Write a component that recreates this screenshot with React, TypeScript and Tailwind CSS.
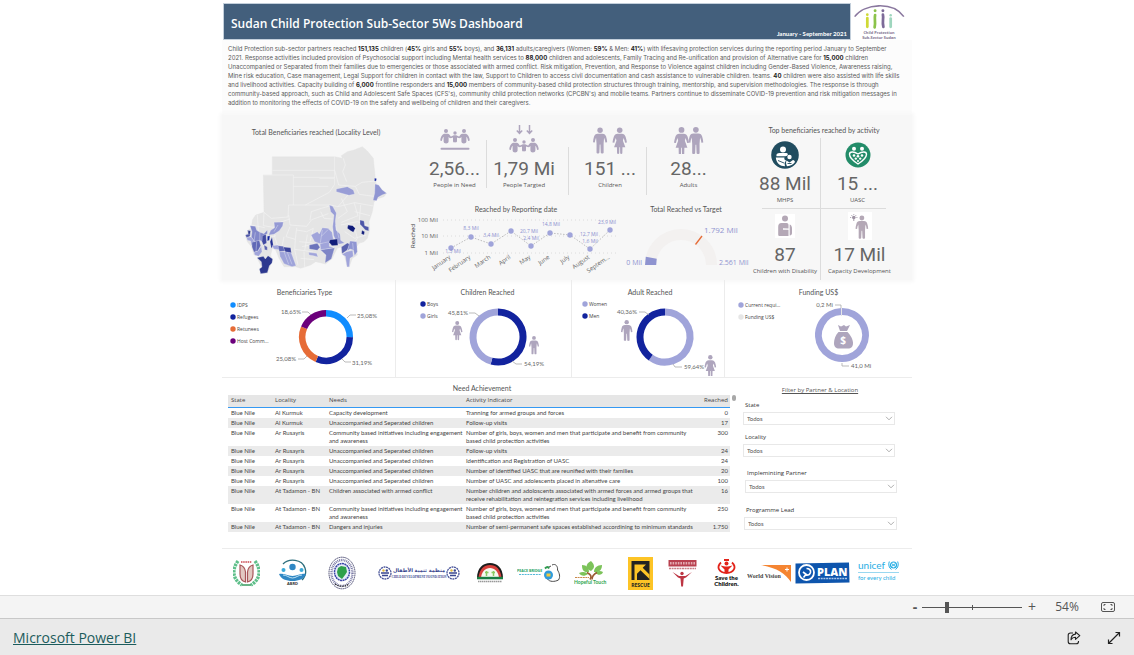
import React from "react";

type Slice = { label: string; value: number; color: string };

const INK = "#aea5bd";
const LILAC = "#a0a4da";
const NAVY = "#12239e";

/* ---------- pictograms ---------- */

type FigureProps = { x: number; y: number; s?: number; fill?: string };

function Man({ x, y, s = 1, fill = INK }: FigureProps) {
  return (
    <g transform={`translate(${x} ${y}) scale(${s})`} fill={fill}>
      <circle cx="6" cy="2.3" r="2.3" />
      <path d="M4 5.3h4c1.8 0 2.6 1 3.1 2.4.5 1.500.8 3.200.9 4.900l-1.500.2c-.2-1.600-.5-2.900-1.100-4.200L9 13.600v7.700c0 .9-2.300.9-2.400 0L6.300 14.500h-.6l-.3 6.800c-.1.9-2.400.9-2.400 0v-7.700l-.4-5C2 9.900 1.700 11.200 1.500 12.800L0 12.600c.1-1.700.4-3.400.9-4.900C1.400 6.300 2.200 5.300 4 5.300z" />
    </g>
  );
}

function Woman({ x, y, s = 1, fill = INK }: FigureProps) {
  return (
    <g transform={`translate(${x} ${y}) scale(${s})`} fill={fill}>
      <circle cx="6" cy="2.3" r="2.3" />
      <path d="M4.300 5.300h3.400c1.700 0 2.600 1 3.200 2.400.5 1.500.9 3.200 1.100 4.900l-1.500.2c-.3-1.600-.7-2.900-1.300-4.100l-.5 2.300 2 5.500H8.300l-.1 4.900c-.1.800-1.700.800-1.800 0l-.1-4.900h-.6l-.1 4.900c-.1.800-1.700.800-1.800 0l-.1-4.900H1.300l2-5.500-.5-2.300c-.6 1.200-1 2.500-1.300 4.100L0 12.600c.2-1.700.6-3.400 1.100-4.900.6-1.400 1.500-2.400 3.200-2.400z" />
    </g>
  );
}

function Family({ dy = 0 }: { dy?: number }) {
  return (
    <g transform={`translate(0 ${dy})`} fill={INK}>
      <circle cx="6" cy="2" r="2" />
      <circle cx="15" cy="4" r="1.700" />
      <circle cx="24" cy="2" r="2" />
      <path d="M4 4.800h4c1.500.5 2.500 2 3.200 3.600L10 9.200 8.600 8v4.500c0 2.500-5 2.500-5 0V7.800c-.9 1-1.400 2.500-1.700 4.200L.2 11.600C.5 8.600 1.800 5.500 4 4.800z" />
      <path d="M26 4.800h-4c-1.500.5-2.500 2-3.200 3.600l1.200.8L21.400 8v4.500c0 2.500 5 2.500 5 0V7.800c.9 1 1.400 2.500 1.700 4.200l1.700-.4c-.3-3-1.600-6.100-3.800-6.800z" />
      <path d="M13.800 6.200h2.400l3.800 1.800-.5 1.300-2.500-.7v3.600c0 1.600-4 1.600-4 0V8.600l-2.500.7L10 8z" />
    </g>
  );
}

function NeedIcon() {
  return (
    <svg viewBox="0 0 30 22" className="h-[22px] w-[30px]" aria-hidden="true">
      <Family />
      <path d="M1.500 19.800h27" stroke={INK} strokeWidth="2" strokeLinecap="round" />
    </svg>
  );
}

function TargetIcon() {
  return (
    <svg viewBox="0 0 30 30" className="h-[30px] w-[30px]" aria-hidden="true">
      <path d="M10.500 0v8M7.800 5.500l2.700 3 2.700-3M20.500 0v8M17.800 5.500l2.700 3 2.700-3" fill="none" stroke={INK} strokeWidth="1.500" />
      <Family dy={13} />
    </svg>
  );
}

function ChildrenIcon() {
  return (
    <svg viewBox="0 0 34 27" className="h-[27px] w-[34px]" aria-hidden="true">
      <Man x={0} y={0.500} s={1.180} />
      <Woman x={19.500} y={0.500} s={1.200} />
    </svg>
  );
}

function AdultsIcon() {
  return (
    <svg viewBox="0 0 30 27" className="h-[27px] w-[30px]" aria-hidden="true">
      <Woman x={0} y={0} s={1.250} />
      <Man x={14.500} y={0} s={1.230} />
    </svg>
  );
}

function MhpsIcon() {
  return (
    <svg viewBox="0 0 28 28" className="size-7" aria-hidden="true">
      <circle cx="14" cy="14" r="13.800" fill="#204c5f" />
      <g fill="#fff">
        <circle cx="12" cy="8.500" r="3" />
        <path d="M5.500 15.200c-.6-2 1-3.200 3.200-3.200h6.600c1.500 0 2 1.500 1 2.600-.6.6-1 .6-1.800.6z" />
        <path d="M4.800 16.500h8.700c-.6 1.500.2 2.600 1.500 3l-1.500 2.500.5 3.300c-5-.1-8.700-3.300-9.200-8.800z" />
        <circle cx="18.500" cy="16" r="2.200" />
        <path d="M15.500 19.500l3 2 3.500-2.500c1.200.2 1.700 1 2 2-1.700 2.500-4.500 4-8 4.300-1-2-1.300-4-.5-5.800z" />
      </g>
      <path d="M7 19.500l6 2.500M16.500 22.500h4" stroke="#204c5f" strokeWidth="0.900" />
    </svg>
  );
}

function UascIcon() {
  return (
    <svg viewBox="0 0 26 26" className="size-[26px]" aria-hidden="true">
      <circle cx="13" cy="13" r="12.500" fill="#238c69" />
      <circle cx="9" cy="6.800" r="2" fill="#fff" />
      <circle cx="17" cy="6.800" r="2" fill="#fff" />
      <path d="M13 22C7.500 18.500 4.500 15.500 4.500 12.300 4.500 9.500 8.500 9 13 12c4.500-3 8.500-2.500 8.500.3 0 3.200-3 6.200-8.500 9.700z" fill="none" stroke="#fff" strokeWidth="1.400" />
      <g fill="#fff">
        <circle cx="9" cy="13.500" r="1.300" />
        <circle cx="13" cy="14.200" r="1.300" />
        <circle cx="17" cy="13.500" r="1.300" />
        <circle cx="10.800" cy="16.600" r="1.200" />
        <circle cx="15.200" cy="16.600" r="1.200" />
        <circle cx="13" cy="19" r="1" />
      </g>
    </svg>
  );
}

function DisabilityIcon() {
  return (
    <svg viewBox="0 0 20 24" className="h-6 w-5 bg-white" aria-hidden="true">
      <g fill="#b4a8b6">
        <circle cx="10" cy="4.500" r="3" />
        <path d="M6.500 9h5c1.300 0 2 .8 2 2v3.500l-5.500-.3v1.600h5.500V22H4.500c-1 0-1.300-.8-1.300-1.600V13c0-2.500 1-4 3.300-4z" />
        <path d="M14.700 10.500c1.600.5 2.300 2 2.300 4.500v4c0 1.500-.8 2.300-2.300 2.500z" />
      </g>
    </svg>
  );
}

function CapacityIcon() {
  return (
    <svg viewBox="0 0 24 28" className="h-7 w-6 bg-white" aria-hidden="true">
      <Man x={7.500} y={3.500} s={1.060} fill="#b4a8b6" />
      <circle cx="5.800" cy="5.500" r="1.800" fill="#9d93a3" />
      <path d="M5.800 7v2M2.200 5.500h1M8.400 5.500h1M3.300 3l.8.800M8.300 3l-.8.800M5.800 2v.8" stroke="#9d93a3" strokeWidth="0.900" />
    </svg>
  );
}

/* ---------- header and narrative ---------- */

function SectorLogo() {
  return (
    <svg viewBox="0 0 56 38" className="h-[37px] w-14 shrink-0" role="img" aria-label="Child Protection Sub-Sector Sudan">
      <path d="M3 14C13 .5 42-2 53.500 14" fill="none" stroke="#8a789f" strokeWidth="1.600" />
      <g strokeWidth="2.800" strokeLinecap="round">
        <path d="M16 15.500v9" stroke="#cfd935" />
        <path d="M24 12.500c-1 4 .8 7-.5 12.500" stroke="#8bc34a" />
        <path d="M32 12c1 4-1 7 .5 12.500" stroke="#7d6a99" />
        <path d="M40 16v8.500" stroke="#9fd6be" />
      </g>
      <circle cx="16" cy="12" r="1.400" fill="#cfd935" />
      <circle cx="24" cy="8" r="1.500" fill="#8bc34a" />
      <circle cx="32" cy="8" r="1.500" fill="#7d6a99" />
      <circle cx="40" cy="12.500" r="1.300" fill="#9fd6be" />
      <g fontSize="4" fontWeight="700" fill="#7f7490" textAnchor="middle" fontFamily="'Open Sans', sans-serif">
        <text x="28" y="32">Child Protection</text>
        <text x="28" y="37">Sub-Sector Sudan</text>
      </g>
    </svg>
  );
}

function Header() {
  return (
    <header className="flex items-center pt-[3px] pr-[5px] pl-px">
      <div className="flex h-[37px] flex-1 items-center justify-between border border-[#c3cfdb] bg-[#435f7c] pr-[3px] pl-[7px] text-white">
        <h1 className="pt-1 text-[12px] font-semibold whitespace-nowrap">
          Sudan Child Protection Sub-Sector 5Ws Dashboard
        </h1>
        <span className="self-end font-['Lato',sans-serif] text-[6px] leading-[10px] font-bold">January - September 2021</span>
      </div>
      <SectorLogo />
    </header>
  );
}

function B({ children }: { children: React.ReactNode }) {
  return <b className="font-bold text-[#222]">{children}</b>;
}

function Narrative() {
  return (
    <p className="min-h-[75px] bg-[#fcfcfc] pt-1 pl-[6px] font-['Inter',sans-serif] text-[6px] leading-[9px] whitespace-nowrap text-[#5a5a5a]">
      Child Protection sub-sector partners reached <B>151,135</B> children (<B>45%</B> girls and <B>55%</B> boys), and <B>36,131</B> adults/caregivers (Women: <B>59%</B> &amp; Men: <B>41%</B>) with lifesaving protection services during the reporting period January to September
      <br />
      2021. Response activities included provision of Psychosocial support including Mental health services to <B>88,000</B> children and adolescents, Family Tracing and Re-unification and provision of Alternative care for <B>15,000</B> children
      <br />
      Unaccompanied or Separated from their families due to emergencies or those associated with armed conflict. Risk mitigation, Prevention, and Response to Violence against children including Gender-Based Violence, Awareness raising,
      <br />
      Mine risk education, Case management, Legal Support for children in contact with the law, Support to Children to access civil documentation and cash assistance to vulnerable children. teams. <B>40</B> children were also assisted with life skills
      <br />
      and livelihood activities. Capacity building of <B>6,000</B> frontline responders and <B>15,000</B> members of community-based child protection structures through training, mentorship, and supervision methodologies. The response is through
      <br />
      community-based approach, such as Child and Adolescent Safe Spaces (CFS's), community child protection networks (CPCBN's) and mobile teams. Partners continue to disseminate COVID-19 prevention and risk mitigation messages in
      <br />
      addition to monitoring the effects of COVID-19 on the safety and wellbeing of children and their caregivers.
    </p>
  );
}

/* ---------- map ---------- */

const OUTLINE =
  "155,125 342,125 365,130 362,122 380,110 400,105 425,95 440,108 458,130 462,170 465,200 470,215 498,235 490,245 468,252 460,262 455,290 445,320 447,345 440,370 430,380 415,385 408,395 410,420 395,430 385,457 378,450 372,425 362,415 365,395 350,400 342,415 335,430 315,447 285,440 270,450 240,460 225,455 190,455 175,430 165,405 155,400 150,420 155,435 148,455 140,475 118,475 122,455 110,430 118,422 100,420 92,395 80,380 75,365 82,345 92,340 95,315 105,300 130,292 128,180 155,180";

const REGIONS: [string, string][] = [
  ["347,222 380,215 398,225 402,237 385,241 360,234 347,230", "#989dd6"],
  ["463,207 474,210 485,225 498,235 484,240 472,247 468,257 457,256 462,235", "#8f95d2"],
  ["462,189 468,191 466,199 461,197", NAVY],
  ["326,270 336,274 347,294 344,318 346,345 358,357 360,376 372,384 354,388 345,375 339,362 336,335 340,300 330,290", "#989dd6"],
  ["305,338 322,340 334,352 338,372 326,384 298,386 282,380 271,360 290,350 296,357", LILAC],
  ["266,390 290,385 298,397 290,406 266,402", "#6c74bb"],
  ["264,412 288,415 292,426 278,422 265,420", LILAC],
  ["299,404 342,398 332,432 313,444 316,420", "#7e85c6"],
  ["298,386 326,380 326,394 340,398 300,404", LILAC],
  ["328,374 350,372 352,391 334,392 325,382", "#101c7a"],
  ["362,396 380,384 388,388 380,405 364,416", "#5a62ae"],
  ["388,378 408,380 410,410 402,422 398,405 388,402 380,408", "#8f95d2"],
  ["378,410 396,406 398,424 388,430 386,455 379,456 374,424 364,418", LILAC],
  ["382,330 396,332 404,340 398,352 388,346 380,340", "#101c7a"],
  ["418,315 430,318 432,332 444,336 444,348 434,345 426,336 418,328", "#4d56a8"],
  ["424,346 432,350 430,360 422,356", "#101c7a"],
  ["160,322 188,321 186,333 176,347 160,358 144,360 150,346 162,338", "#9499d4"],
  ["88,332 104,334 108,346 118,352 118,376 102,380 92,366 94,350", "#8288ca"],
  ["80,346 90,347 88,364 78,368 74,360 84,357", "#4d56a8"],
  ["83,347 89,348 87,358 83,358", "#101c7a"],
  ["78,367 92,366 102,380 92,392 90,378 80,376", LILAC],
  ["94,382 116,376 120,392 112,408 100,412 94,396", "#6068b6"],
  ["100,412 112,408 122,394 124,410 114,424 102,420", LILAC],
  ["118,352 130,356 140,345 140,356 128,362 124,380 118,376", "#8288ca"],
  ["125,362 136,358 138,384 128,390 124,380", "#4049a0"],
  ["140,364 148,362 146,376 140,378", NAVY],
  ["148,380 154,366 158,392 152,400", "#232f93"],
  ["130,390 140,396 140,406 132,404", "#5a62ae"],
  ["154,392 172,390 178,404 160,402", LILAC],
  ["172,392 188,394 194,408 176,410", "#6068b6"],
  ["188,396 210,398 212,414 194,412", "#3b449c"],
  ["176,410 194,410 212,414 226,452 214,455 190,446 178,424", "#9ea3d9"],
  ["109,428 128,424 134,432 142,422 156,432 154,444 146,452 140,473 120,476 116,462 124,456 122,440", "#2c388f"],
];

function SudanMap() {
  return (
    <svg viewBox="70 90 432 390" className="h-[130px] w-36" role="img" aria-label="Beneficiaries reached per locality">
      <polygon points={OUTLINE} fill="#e5e5e5" stroke="#e0e0e0" strokeWidth="1" strokeLinejoin="round" />
      <g fill="none" stroke="#f3f3f3" strokeWidth="2">
        <path d="M155 166h187M342 125v83l-16 24-72 38M128 180h90v90M218 187h124M218 214h105M296 190h44M204 270h126M130 292l22 18 50-4 2-36M342 166l12 44 50 4 20-12 40-4M368 130l6 20-8 20 12 30M404 214l12 24 44 6M330 270l22 5 30-35M352 275l50-12 56 10M400 262l12 40-50 20M402 290l46 12M362 250l18 40-28 20M420 270l-4 45M360 330l50-10 34 12M372 350l30 20 34-10M400 330l10 40-10 15" />
        <path d="M130 292l-2 40 30 5 20-15 30-10M204 300l4 30 50 4 15-20 50-18M268 315l4-25 30-10 28-8M208 335l-12 30 28 8 4-35M228 345l30 5 20-10M224 373l-2 30 30 4 8-48M252 407l26 4M222 403l10 48M250 410l2 46M190 365l-6 30M160 358l10 32M236 380l40 4M244 395l38-8M278 340l-10 40M240 430l40 4M300 290l10 20 26 2M116 376l50-14M92 330l40 8M110 300l4 60" />
      </g>
      <g stroke="#f7f7f7" strokeWidth="0.800">
        {REGIONS.map(([points, fill]) => (
          <polygon key={points} points={points} fill={fill} />
        ))}
      </g>
      <path d="M190 410l14 38M200 412l14 36M305 345l-6 38M322 344l-20 20M345 330l10 40M396 384l2 20M104 352l-4 28M172 330l-12 20M108 380l-2 30" stroke="#e9eaf6" strokeWidth="1.200" fill="none" />
    </svg>
  );
}

/* ---------- figures ---------- */

const KPIS = [
  { icon: <NeedIcon />, value: "2,56...", label: "People in Need", cell: "pl-3", line: "top-[25px]" },
  { icon: <TargetIcon />, value: "1,79 Mi", label: "People Targted", cell: "pr-2", line: "top-8" },
  { icon: <ChildrenIcon />, value: "151 ...", label: "Children", cell: "pl-1", line: "top-8" },
  { icon: <AdultsIcon />, value: "28...", label: "Adults", cell: "pr-5", line: "" },
];

const ACTIVITIES = [
  { icon: <MhpsIcon />, value: "88 Mil", label: "MHPS", cell: "border-r border-b pr-3" },
  { icon: <UascIcon />, value: "15 ...", label: "UASC", cell: "border-b pl-2" },
  { icon: <DisabilityIcon />, value: "87", label: "Children with Disability", cell: "border-r pr-3" },
  { icon: <CapacityIcon />, value: "17 Mil", label: "Capacity Development", cell: "pl-3" },
];

function Figure({ icon, value, label }: { icon: React.ReactNode; value: string; label: string }) {
  return (
    <>
      <span className="flex h-[34px] items-center justify-center">{icon}</span>
      <span className="font-['Roboto',sans-serif] text-[19px] leading-6 whitespace-nowrap text-[#666]">{value}</span>
      <span className="text-[6px] leading-[9px] whitespace-nowrap text-[#555]">{label}</span>
    </>
  );
}

const TITLE = "text-center font-['Lato',sans-serif] text-[7px] whitespace-nowrap text-[#555]";

const MONTHS = [
  { name: "January", x: 451, y: 249, text: "1,3 Mil", tx: 453, ty: 254 },
  { name: "February", x: 471, y: 238, text: "8,3 Mil", tx: 471, ty: 231 },
  { name: "March", x: 491, y: 245, text: "3,4 Mil", tx: 491, ty: 238 },
  { name: "April", x: 511, y: 232, text: "20,7 Mil", tx: 529, ty: 234 },
  { name: "May", x: 531, y: 247, text: "2,4 Mil", tx: 531, ty: 241 },
  { name: "June", x: 550, y: 234, text: "14,8 Mil", tx: 551, ty: 227 },
  { name: "July", x: 570, y: 236, text: "12,7 Mil", tx: 589, ty: 237 },
  { name: "August", x: 590, y: 250, text: "1,6 Mil", tx: 590, ty: 244 },
  { name: "Septem...", x: 610, y: 231, text: "23,9 Mil", tx: 607, ty: 225 },
];

function LineChart() {
  return (
    <svg viewBox="410 215 212 62" className="w-full" role="img" aria-label="Reached by Reporting date" fontFamily="'Open Sans', sans-serif">
      {[221, 237, 254].map((y, i) => (
        <g key={y}>
          <path d={`M443 ${y}H617`} stroke="#dcdcdc" strokeWidth="1" strokeDasharray="1 3" />
          <text x="438" y={y + 2} textAnchor="end" fontSize="6" fill="#666">
            {["100 Mil", "10 Mil", "1 Mil"][i]}
          </text>
        </g>
      ))}
      <text transform="translate(415 237) rotate(-90)" textAnchor="middle" fontSize="6" fill="#333">
        Reached
      </text>
      <polyline points={MONTHS.map((m) => `${m.x},${m.y}`).join(" ")} fill="none" stroke="#bdbdbd" strokeWidth="1" strokeDasharray="1.500 1.500" />
      {MONTHS.map((m) => (
        <g key={m.name}>
          <circle cx={m.x} cy={m.y} r="2.700" fill={LILAC} />
          <text x={m.tx} y={m.ty} textAnchor="middle" fontSize="5" fill="#8a90d0">
            {m.text}
          </text>
          <text transform={`translate(${m.x} 259) rotate(-35)`} textAnchor="end" fontSize="6" fill="#666">
            {m.name}
          </text>
        </g>
      ))}
    </svg>
  );
}

function Gauge() {
  return (
    <svg viewBox="622 215 128 56" className="w-full" role="img" aria-label="Total Reached vs Target" fontFamily="'Open Sans', sans-serif" fill="#8f94d0">
      <path d="M650.500 266a30.500 30.500 0 0 1 61 0" fill="none" stroke="#f3f1f0" strokeWidth="11" />
      <path d="M645 266l.8-8.200 10.900 2-.5 6.200z" />
      <path d="M695.500 245.500l6.500-8.500" stroke="#e66c37" strokeWidth="1.300" />
      <text x="704" y="234" fontSize="8">1.792 Mil</text>
      <text x="642" y="266" fontSize="7" textAnchor="end">0 Mil</text>
      <text x="719" y="266" fontSize="7">2.561 Mil</text>
    </svg>
  );
}

function Overview() {
  return (
    <section className="grid min-h-[165px] grid-cols-[minmax(0,188fr)_minmax(0,340fr)_minmax(0,162fr)] bg-[#f7f7f7] shadow-[0_0_4px_2px_#f7f7f7]">
      <div className="flex flex-col items-center pt-3">
        <h2 className={`${TITLE} leading-[10px]`}>Total Beneficiaries reached (Locality Level)</h2>
        <div className="pt-2">
          <SudanMap />
        </div>
      </div>

      <div>
        <div className="grid grid-cols-[77fr_82fr_78fr_103fr]">
          {KPIS.map((k) => (
            <div key={k.label} className={`relative flex flex-col items-center pt-2 ${k.cell}`}>
              <Figure icon={k.icon} value={k.value} label={k.label} />
              {k.line && <span className={`absolute right-0 h-12 w-px bg-[#dcdcdc] ${k.line}`} />}
            </div>
          ))}
        </div>
        <div className="grid grid-cols-[212fr_128fr] pt-[14px]">
          <div>
            <h2 className={`${TITLE} leading-[10px]`}>Reached by Reporting date</h2>
            <LineChart />
          </div>
          <div>
            <h2 className={`${TITLE} leading-[10px]`}>Total Reached vs Target</h2>
            <Gauge />
          </div>
        </div>
      </div>

      <div className="pt-[10px] pr-[26px] pl-3">
        <h2 className={`${TITLE} leading-[10px]`}>Top beneficiaries reached by activity</h2>
        <div className="grid grid-cols-[minmax(0,59fr)_minmax(0,65fr)] pt-[3px]">
          {ACTIVITIES.map((a) => (
            <div key={a.label} className={`flex h-[71px] flex-col items-center border-[#dcdcdc] ${a.cell}`}>
              <Figure icon={a.icon} value={a.value} label={a.label} />
            </div>
          ))}
        </div>
      </div>
    </section>
  );
}

/* ---------- donuts ---------- */

function arc(cx: number, cy: number, r: number, from: number, to: number) {
  const point = (share: number) => {
    const angle = share * 2 * Math.PI - Math.PI / 2;
    return `${cx + r * Math.cos(angle)} ${cy + r * Math.sin(angle)}`;
  };
  return `M${point(from)}A${r} ${r} 0 ${to - from > 0.5 ? 1 : 0} 1 ${point(to)}`;
}

function Ring({ cx, cy, r, width, slices }: { cx: number; cy: number; r: number; width: number; slices: Slice[] }) {
  const total = slices.reduce((sum, s) => sum + s.value, 0);
  let start = 0;
  return (
    <g fill="none" strokeWidth={width}>
      {slices.map((s) => {
        const from = start;
        start += s.value / total;
        return <path key={s.label} d={arc(cx, cy, r, from, start)} stroke={s.color} />;
      })}
    </g>
  );
}

type DonutProps = { title: string; slices: Slice[]; pad: string; heading: string; children: React.ReactNode };

function Donut({ title, slices, pad, heading, children }: DonutProps) {
  return (
    <article className="flex flex-col border-r border-[#ececec] last:border-r-0">
      <h2 className={`${TITLE} pt-[6px] leading-3 ${heading}`}>{title}</h2>
      <div className="flex flex-1">
        <ul className={`flex-1 text-[5px] leading-3 whitespace-nowrap text-[#444] ${pad}`}>
          {slices.map((s) => (
            <li key={s.label} className="flex items-center gap-px">
              <svg viewBox="0 0 6 6" className="size-[6px]" aria-hidden="true">
                <circle cx="3" cy="3" r="2.700" fill={s.color} />
              </svg>
              {s.label}
            </li>
          ))}
        </ul>
        {children}
      </div>
    </article>
  );
}

const TYPE: Slice[] = [
  { label: "IDPS", value: 25.08, color: "#118dff" },
  { label: "Refugees", value: 31.19, color: NAVY },
  { label: "Retunees", value: 25.08, color: "#e66c37" },
  { label: "Host Comm...", value: 18.65, color: "#6b007b" },
];
const CHILDREN: Slice[] = [
  { label: "Boys", value: 54.19, color: NAVY },
  { label: "Girls", value: 45.81, color: LILAC },
];
const ADULTS: Slice[] = [
  { label: "Women", value: 59.64, color: LILAC },
  { label: "Men", value: 40.36, color: NAVY },
];
const FUNDING: Slice[] = [
  { label: "Current requi...", value: 41, color: LILAC },
  { label: "Funding US$", value: 0.2, color: "#e6e6e6" },
];

const LABEL = { fontSize: 6, fill: "#666", fontFamily: "'Lato', sans-serif" };
const LEADER = { fill: "none", stroke: "#aaa", strokeWidth: 0.8 };

function Donuts() {
  return (
    <section className="grid min-h-[98px] grid-cols-[174fr_176fr_153fr_187fr] border-b border-[#ececec]">
      <Donut title="Beneficiaries Type" slices={TYPE} pad="pl-2 pt-px" heading="pr-2">
        <svg viewBox="272 298 124 78" className="h-[78px] w-[124px] shrink-0">
          <Ring cx={327} cy={337} r={23.800} width={6.500} slices={TYPE} />
          <path {...LEADER} d="M348 318l3-3h6M303 312h6l3 3M299 359h6l3-3M343 359l3 3h6" />
          <g {...LABEL}>
            <text x="358" y="318">25,08%</text>
            <text x="302" y="314" textAnchor="end">18,65%</text>
            <text x="297" y="361" textAnchor="end">25,08%</text>
            <text x="353" y="365">31,19%</text>
          </g>
        </svg>
      </Donut>
      <Donut title="Children Reached" slices={CHILDREN} pad="pl-6" heading="pl-2">
        <svg viewBox="440 298 132 78" className="h-[78px] w-[132px] shrink-0">
          <Ring cx={499} cy={337} r={25} width={7} slices={CHILDREN} />
          <path {...LEADER} d="M470 313h6l4 3M513 361l4 3h6" />
          <Woman x={453} y={321} s={0.870} />
          <Man x={530} y={336} s={0.830} />
          <g {...LABEL}>
            <text x="469" y="315" textAnchor="end">45,81%</text>
            <text x="525" y="366">54,19%</text>
          </g>
        </svg>
      </Donut>
      <Donut title="Adult Reached" slices={ADULTS} pad="pl-[10px]" heading="pl-1">
        <svg viewBox="610 298 115 78" className="h-[78px] w-[115px] shrink-0">
          <Ring cx={666} cy={337} r={25} width={7} slices={ADULTS} />
          <path {...LEADER} d="M640 312h6l4 3M674 364l2 3h7" />
          <Man x={622} y={320} s={0.950} />
          <Woman x={705.500} y={355} s={0.970} />
          <g {...LABEL}>
            <text x="638" y="314" textAnchor="end">40,36%</text>
            <text x="685" y="369">59,64%</text>
          </g>
        </svg>
      </Donut>
      <Donut title="Funding US$" slices={FUNDING} pad="pl-[13px] pt-px" heading="">
        <svg viewBox="784 298 128 78" className="h-[78px] w-[128px] shrink-0">
          <Ring cx={842} cy={335} r={23.500} width={7} slices={FUNDING} />
          <path d="M841.500 308v8" stroke="#e6e6e6" strokeWidth="1" />
          <path {...LEADER} d="M835 305h6v3M842 363v3h7" />
          <g fill={INK}>
            <path d="M838 325l2 6h7l3-6-4 1.500-2-1.500-3 1.500z" />
            <path d="M838.500 332h9c3 3 5.500 7.500 5.500 11 0 4-2 5.500-5 5.500h-9c-3 0-5-1.500-5-5.500 0-3.500 1.500-8 4.500-11z" />
          </g>
          <text x="843" y="344" fontSize="10" fontWeight="700" fill="#fff" textAnchor="middle" fontFamily="'Open Sans', sans-serif">$</text>
          <g {...LABEL}>
            <text x="833" y="307" textAnchor="end">0,2 Mi</text>
            <text x="851" y="368">41,0 Mi</text>
          </g>
        </svg>
      </Donut>
    </section>
  );
}

/* ---------- table and filters ---------- */

const CBI = "Community based initiatives including engagement and awareness";
const UNACC = "Unaccompanied and Seperated children";
const GIRLS = "Number of girls, boys, women and men that participate and benefit from community based child protection activities";

const ROWS: [string, string, string, string, string][] = [
  ["Blue Nile", "Al Kurmuk", "Capacity development", "Tranning for armed groups and forces", "0"],
  ["Blue Nile", "Al Kurmuk", UNACC, "Follow-up visits", "17"],
  ["Blue Nile", "Ar Rusayris", CBI, GIRLS, "300"],
  ["Blue Nile", "Ar Rusayris", UNACC, "Follow-up visits", "24"],
  ["Blue Nile", "Ar Rusayris", UNACC, "Identification and Registration of UASC", "24"],
  ["Blue Nile", "Ar Rusayris", UNACC, "Number of identified UASC that are reunified with their families", "20"],
  ["Blue Nile", "Ar Rusayris", UNACC, "Number of UASC and adolescents placed in altenative care", "100"],
  ["Blue Nile", "At Tadamon - BN", "Children associated with armed conflict", "Number children and adoloscents associated with armed forces and armed groups that receive rehabilitation and reintegration services including livelihood", "16"],
  ["Blue Nile", "At Tadamon - BN", CBI, GIRLS, "250"],
  ["Blue Nile", "At Tadamon - BN", "Dangers and injuries", "Number of semi-permanent safe spaces established accordining to minimum standards", "1.750"],
];

function NeedTable() {
  return (
    <div>
      <h2 className={`${TITLE} pt-1 leading-3`}>Need Achievement</h2>
      <div className="flex items-start gap-[2px] pt-px">
        <div className="flex-1">
          <table className="w-full table-fixed border-collapse text-left font-['Lato',sans-serif] text-[6px] leading-2 text-[#444]">
            <thead className="bg-[#e6e6e6] font-['Open_Sans',sans-serif] [&_th]:border-b [&_th]:border-[#3599f3] [&_th]:pt-px [&_th]:pb-[3px] [&_th]:font-normal">
              <tr>
                <th className="w-[45px] pl-[3px]">State</th>
                <th className="w-[54px] pl-[2px]">Locality</th>
                <th className="w-[136px] pl-[2px]">Needs</th>
                <th className="pl-[3px]">Activity Indicator</th>
                <th className="w-[28px] pr-[2px] text-right">Reached</th>
              </tr>
            </thead>
            <tbody>
              {ROWS.map((row, i) => (
                <tr key={i} className="align-top odd:bg-white even:bg-[#ebebeb]">
                  <td className="py-px pl-[3px]">{row[0]}</td>
                  <td className="py-px pl-[2px]">{row[1]}</td>
                  <td className="py-px pl-[2px]">{row[2]}</td>
                  <td className="py-px pl-[3px]">{row[3]}</td>
                  <td className="py-px pr-[2px] text-right">{row[4]}</td>
                </tr>
              ))}
            </tbody>
          </table>
        </div>
        <span className="h-[6px] w-1 rounded-sm bg-[#a8a8a8]" />
      </div>
    </div>
  );
}

function Filter({ id, label, className = "" }: { id: string; label: string; className?: string }) {
  return (
    <div className={className}>
      <label htmlFor={id} className="block pl-[2px] text-[6px] leading-[10px] font-medium text-[#333]">
        {label}
      </label>
      <div className="relative mt-[2px]">
        <select id={id} className="block h-[13px] w-full appearance-none border border-[#e8e8e8] bg-white pl-[3px] font-['Lato',sans-serif] text-[6px] leading-[10px] text-[#555]">
          <option>Todos</option>
        </select>
        <svg viewBox="0 0 8 5" className="pointer-events-none absolute top-1 right-[2px] h-[5px] w-2" aria-hidden="true">
          <path d="M1 .8l3 3 3-3" fill="none" stroke="#999" strokeWidth="0.800" />
        </svg>
      </div>
    </div>
  );
}

function Details() {
  return (
    <section className="grid min-h-[171px] grid-cols-[508fr_154fr] gap-[7px] border-b border-[#ececec] pr-[15px] pl-[6px]">
      <NeedTable />
      <div className="pt-2">
        <h2 className="text-center text-[6px] leading-[9px] text-[#555] underline">Filter by Partner &amp; Location</h2>
        <Filter id="state" label="State" className="pt-[5px] pr-[2px]" />
        <Filter id="locality" label="Locality" className="pt-[7px] pr-[2px]" />
        <Filter id="partner" label="Impleminting Partner" className="pt-[11px] pl-[2px]" />
        <Filter id="lead" label="Programme Lead" className="pt-3 pl-px" />
      </div>
    </section>
  );
}

/* ---------- partner logos ---------- */

function PartnerLogos() {
  return (
    <section className="grid h-[46px] grid-cols-[45fr_50fr_50fr_98fr_41fr_57fr_54fr_40fr_45fr_34fr_48fr_63fr_54fr] items-center pt-[2px] pl-[11px]" aria-label="Partners">
      {/* wreath with hands */}
      <svg viewBox="0 0 27 27" className="size-[27px]">
        <path d="M5 1C-1 9-1 19 9 25M22 1c6 8 6 18-4 24" fill="none" stroke="#5fbf8a" strokeWidth="3.400" strokeDasharray="2.500 .8" />
        <path d="M7 5c4 1 5 3 5.500 7v10c-4-1-5.500-4-5.500-8zM20 5c-4 1-5 3-5.500 7v10c4-1 5.500-4 5.500-8z" fill="#e2c8c2" stroke="#a8565a" strokeWidth="1.200" />
        <path d="M8 2h11" stroke="#c9454f" strokeWidth="1.500" strokeDasharray="1.500 .7" />
        <path d="M9 25h9" stroke="#379b5f" strokeWidth="1.500" />
      </svg>
      {/* ABRD */}
      <svg viewBox="0 0 30 28" className="h-7 w-[30px]">
        <path d="M5 5C11-1 24 0 27 9c2 6 0 9-3 12" fill="none" stroke="#2c6e7d" strokeWidth="1.300" />
        <g fill="#2f87c4">
          <circle cx="14.500" cy="8" r="3.200" />
          <circle cx="5.500" cy="11" r="2" fill="#3aa9d8" />
          <circle cx="23.500" cy="11" r="2" fill="#3aa9d8" />
          <path d="M1 15c5-1 8 2 13.500 2S23 14 28 15c-2 5-7 7-13.500 7S3 20 1 15z" />
        </g>
        <path d="M5 16c4 0 6 3 9.500 3s5.500-3 9.500-3" fill="none" stroke="#bfe4f5" strokeWidth="1" />
        <text x="14.500" y="26" fontSize="4" fontWeight="700" textAnchor="middle" fill="#333" fontFamily="'Open Sans', sans-serif">ABRD</text>
      </svg>
      {/* round seal */}
      <svg viewBox="0 0 28 34" className="h-[34px] w-7">
        <ellipse cx="14" cy="17" rx="13" ry="15.800" fill="#fff" stroke="#4b4b72" strokeWidth="1" strokeDasharray="1.500 .5" />
        <ellipse cx="14" cy="17" rx="10.500" ry="13" fill="none" stroke="#7c7ca6" strokeWidth="2.400" strokeDasharray="1 .8" />
        <ellipse cx="14" cy="16" rx="7.500" ry="8.500" fill="#e6ecf8" stroke="#3b46a8" strokeWidth="1.500" strokeDasharray="2 .5" />
        <path d="M10 12l3-2 5 1 1 5-2 3-3 4-4-3-1-4z" fill="#2fa04b" />
        <path d="M7 28c4 3 10 3 14 0" fill="none" stroke="#333" strokeWidth="1.200" strokeDasharray="1.500 1" />
      </svg>
      {/* Child Development Foundation */}
      <svg viewBox="0 0 82 16" className="h-4 w-[82px]">
        {[7, 75].map((cx) => (
          <g key={cx}>
            <circle cx={cx} cy="8" r="6" fill="#fff" stroke="#4a5599" strokeWidth="1.300" strokeDasharray="2 .6" />
            <path d={`M${cx - 4} 8h8M${cx - 3} 10.500h6`} stroke="#3a478f" strokeWidth="1.500" />
            <circle cx={cx - 1.500} cy="5.500" r="1.200" fill="#e0b93c" />
            <circle cx={cx + 1.800} cy="5.500" r="1.200" fill="#3a478f" />
          </g>
        ))}
        <g textAnchor="middle" fill="#35418c">
          <text x="41" y="7" fontSize="5" fontWeight="700" fontFamily="'DejaVu Sans', sans-serif">منظمة تنمية الأطفال</text>
          <text x="41" y="12.500" fontSize="3" fontWeight="700" fontFamily="'Liberation Serif', serif">CHILD DEVELOPMENT FOUNDATION</text>
        </g>
      </svg>
      {/* arch */}
      <svg viewBox="0 0 28 22" className="h-[22px] w-7">
        <path d="M1 16C1 6 7 1 14 1s13 5 13 15z" fill="#1d1d1d" />
        <path d="M2.500 16C3 7.500 8 3 14 3s11 4.500 11.500 13z" fill="#d8413c" />
        <path d="M5 16c.5-6.500 4.500-10 9-10s8.500 3.500 9 10z" fill="#f6faf1" />
        <path d="M10.500 9v5M17.500 9v5M9 10.500h3.500M15.500 10.500h3.500" stroke="#8ccb63" strokeWidth="1.500" />
        <path d="M1 14.800h26v2.500H1z" fill="#1b7e42" />
        <path d="M2 19.500h24" stroke="#999" strokeWidth="1.400" strokeDasharray="1.500 .5" />
      </svg>
      {/* Peace Bridge */}
      <svg viewBox="0 0 44 20" className="h-5 w-11">
        <text x="0" y="8.500" fontSize="3.600" fontWeight="700" fill="#249f62" fontFamily="'Open Sans', sans-serif">PEACE BRIDGE</text>
        <path d="M2 11.500h22" stroke="#54b8d8" strokeWidth="1.200" strokeDasharray="2 .8" />
        <path d="M35 2c4-2 6 2 5.500 5 2 3 3 7 1 10-4 2-9 2-11-1M34 3l-3 1.500" fill="none" stroke="#4a4a4a" strokeWidth="1" />
        <circle cx="31.500" cy="12" r="4.500" fill="#2f9bdc" />
        <path d="M29.500 10.500h4v3h-4z" fill="#f0c93d" />
        <path d="M28 5.500c2-2 3-2 4 0" stroke="#2e9a4f" strokeWidth="2" fill="none" />
      </svg>
      {/* Hopeful Touch */}
      <svg viewBox="0 0 36 24" className="h-6 w-9">
        <g fill="#7cc35a">
          <path d="M17 10C11 8 11 3 17 0c4 4 4 7 0 10z" />
          <path d="M15 11C9 12 8 8 8 4c5 0 7 3 7 7zM20 11c6 1 8-3 8-7-5 0-8 3-8 7z" />
          <path d="M14 13c-4 3-7 2-9-1 4-2 7-1 9 1zM21 12c4 3 7 2 8-1-3-2-6-1-8 1z" />
        </g>
        <path d="M16 18.500c2-3 1-5-3-7M18 18.500c0-3 1-5 5-7" fill="none" stroke="#9b5a33" strokeWidth="1.600" />
        <path d="M1 16.500h14" stroke="#c98a4b" strokeWidth="1.200" strokeDasharray="2 .6" />
        <text x="0" y="22.500" fontSize="5" fontWeight="700" fill="#2fa64f" fontFamily="'Lato', sans-serif">Hopeful Touch</text>
      </svg>
      {/* Rescue */}
      <svg viewBox="0 0 25 33" className="h-[33px] w-[25px]">
        <path d="M0 0h25v33H0z" fill="#fdc426" />
        <path d="M3.500 4h18v19h-18z" fill="#222" />
        <path d="M6.500 7.500h11.500l-3.300 3.300 6.800 6.700v4.500l-9-8.800L9 16.700V23H6.500z" fill="#fdc426" />
        <text x="12.500" y="29.500" fontSize="5" fontWeight="700" textAnchor="middle" fill="#222" fontFamily="'Open Sans', sans-serif">RESCUE</text>
      </svg>
      {/* humanitarian figure */}
      <svg viewBox="0 0 29 28" className="h-7 w-[29px]">
        <path d="M.5 1h28v6.500H.5z" fill="#b8404f" />
        <path d="M2 4.200h25" stroke="#e3aab1" strokeWidth="2.600" strokeDasharray="1.600 1" />
        <path d="M1 9.500h27" stroke="#c87d86" strokeWidth="1.400" strokeDasharray="2 .6" />
        <circle cx="14" cy="14.500" r="1.700" fill="#bd3644" />
        <path d="M4.500 13l6.500 4h6.500L24 13l-6 5.500-2.300 1-.7 8h-1.800l-.7-8-2.500-1z" fill="#bd3644" />
      </svg>
      {/* Save the Children */}
      <svg viewBox="0 0 27 28" className="h-7 w-[27px]">
        <path d="M11 1h5M8 3.500C3 8 6 14 13.500 14S24 8 19 3.500" fill="none" stroke="#e2231a" strokeWidth="1.800" />
        <circle cx="13.500" cy="4.500" r="2" fill="#e2231a" />
        <path d="M7.500 6.500l4.500 1h3l4.500-1-4 4v3h-4v-3z" fill="#e2231a" />
        <g fontSize="6" fontWeight="800" fill="#222" textAnchor="middle" fontFamily="'Lato', sans-serif">
          <text x="13.500" y="20.500">Save the</text>
          <text x="13.500" y="26.500">Children.</text>
        </g>
      </svg>
      {/* World Vision */}
      <svg viewBox="0 0 45 20" className="h-5 w-[45px]">
        <path d="M14 2h30v17c-6-9-14-14-30-17z" fill="#f58532" />
        <path d="M40 4.500v4M38 6.500h4" stroke="#fff" strokeWidth="1" />
        <path d="M0 9h28l6 7H0z" fill="#fff" />
        <text x="0" y="15" fontSize="6" fontWeight="700" fill="#444" fontFamily="'Liberation Serif', serif">World Vision</text>
      </svg>
      {/* Plan */}
      <svg viewBox="0 0 55 22" className="h-[22px] w-[55px]">
        <path d="M.5 1.500L54 .5l.5 20L30 21l-29.500.5z" fill="#0e55ad" />
        <circle cx="11.500" cy="10.500" r="7.500" fill="none" stroke="#fff" strokeWidth="1.800" />
        <path d="M11.500 6.500c3 0 4.500 1.500 4 4-1 2.500-3 3-5 2.500l-2 2.500M8 10l4 3" stroke="#fff" strokeWidth="1.600" fill="none" />
        <text x="22" y="13.500" fontSize="11" fontWeight="800" fill="#fff" fontFamily="'Open Sans', sans-serif">PLAN</text>
        <path d="M23 16.500h29" stroke="#a9c6ea" strokeWidth="1.600" strokeDasharray="2 .7" />
      </svg>
      {/* unicef */}
      <svg viewBox="0 0 42 30" className="h-[30px] w-[42px]" fill="#27aee4" fontFamily="'Lato', sans-serif">
        <text x="0" y="11" fontSize="10">unicef</text>
        <circle cx="35.500" cy="7" r="3" fill="none" stroke="#27aee4" strokeWidth="1.200" />
        <path d="M33.500 5.500l4 3M33.500 8.500l4-3M31.300 3.500c-1.200 3-.3 6.500 2.200 8M39.700 3.500c1.200 3 .3 6.500-2.200 8" fill="none" stroke="#27aee4" strokeWidth="1" />
        <path d="M0 14.500h41" stroke="#7fcdec" strokeWidth="0.800" />
        <text x="0" y="22" fontSize="6">for every child</text>
      </svg>
    </section>
  );
}

/* ---------- viewer chrome ---------- */

function ZoomBar() {
  return (
    <div className="flex h-6 items-center justify-end border-t border-b border-t-[#dedede] border-b-[#c8c8c8] bg-[#f4f4f4] pr-[18px] text-[#555]">
      <button type="button" aria-label="Zoom out" className="w-[14px] text-center text-[14px] leading-5 font-bold">
        -
      </button>
      <div className="relative flex w-[100px] items-center">
        <input
          type="range"
          aria-label="Zoom"
          min={0}
          max={100}
          defaultValue={24}
          className="h-[11px] w-full appearance-none bg-[linear-gradient(#555,#555)] bg-[length:100%_1px] bg-center bg-no-repeat [&::-webkit-slider-thumb]:h-[11px] [&::-webkit-slider-thumb]:w-1 [&::-webkit-slider-thumb]:appearance-none [&::-webkit-slider-thumb]:bg-[#555]"
        />
        <span className="pointer-events-none absolute left-1/2 h-[5px] w-px bg-[#555]" />
      </div>
      <button type="button" aria-label="Zoom in" className="w-5 text-center text-[14px] leading-5">
        +
      </button>
      <span className="w-[50px] text-center text-[12px] leading-5">54%</span>
      <button type="button" aria-label="Fit to page" className="ml-2">
        <svg viewBox="0 0 16 12" className="h-3 w-4" fill="none" stroke="#555">
          <rect x="1.500" y="1.500" width="13" height="9" rx="1.500" />
          <path d="M4 5V3.500h1.500M10.500 3.500H12V5M12 7v1.500h-1.500M5.500 8.500H4V7" />
        </svg>
      </button>
    </div>
  );
}

function Footer() {
  return (
    <footer className="flex h-9 items-center bg-[#eaeaea] px-[13px] pt-px">
      <a href="#powerbi" className="text-[14px] leading-5 text-[#1c5c5c] underline">
        Microsoft Power BI
      </a>
      <button type="button" aria-label="Share" className="mr-[26px] ml-auto">
        <svg viewBox="0 0 14 14" className="size-[14px]" fill="none" stroke="#222" strokeWidth="1.100" strokeLinejoin="round">
          <path d="M6 2H3.500A2.300 2.300 0 0 0 1.200 4.300v6.200a2.300 2.300 0 0 0 2.300 2.300h5.700a2.300 2.300 0 0 0 2.300-2.300V10" />
          <path d="M8.500 1l4.300 3.700-4.300 3.700V6.300C6.500 6.200 5 7 4 8.800 4 5.500 5.800 3.300 8.500 3.100z" />
        </svg>
      </button>
      <button type="button" aria-label="Full screen">
        <svg viewBox="0 0 14 14" className="size-[14px]" fill="none" stroke="#222" strokeWidth="1.200">
          <path d="M8.500 1.500h4v4M12.500 1.500l-11 11M1.500 8.500v4h4" />
        </svg>
      </button>
    </footer>
  );
}

export default function App() {
  return (
    <div className="flex min-h-screen flex-col bg-white font-['Open_Sans',sans-serif]">
      <main className="mx-auto w-full max-w-[690px] flex-1">
        <Header />
        <Narrative />
        <Overview />
        <Donuts />
        <Details />
        <PartnerLogos />
      </main>
      <ZoomBar />
      <Footer />
    </div>
  );
}
